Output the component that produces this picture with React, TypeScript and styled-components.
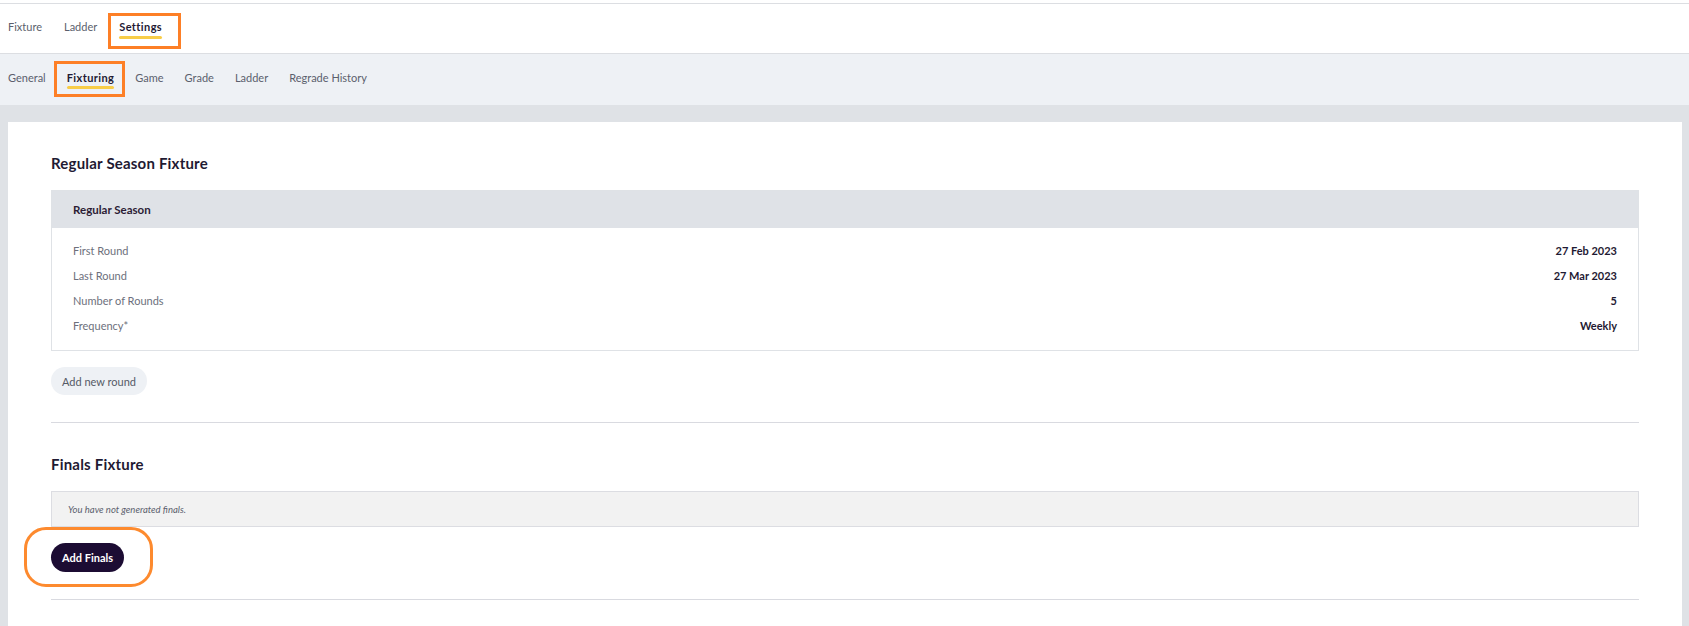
import React from "react";
import styled, { createGlobalStyle, css } from "styled-components";

const GlobalStyle = createGlobalStyle`
  html, body { margin: 0; padding: 0; background: #ffffff; }
  body { font-family: Lato, "Noto Sans", Arial, sans-serif; color: #1f1a33; }
  * { box-sizing: border-box; }
`;

const Page = styled.div`
  display: flex;
  flex-direction: column;
  min-height: 626px;
`;

const TopNav = styled.nav`
  margin-top: 3px;
  height: 51px;
  border-top: 1px solid #dcdee2;
  border-bottom: 1px solid #dcdee2;
  background: #ffffff;
  display: flex;
  align-items: center;
  padding: 0 8px 4px;
  gap: 22px;
`;

const SubNav = styled.nav`
  height: 51px;
  background: #eef1f5;
  display: flex;
  align-items: center;
  padding: 0 8px 3px;
  gap: 21px;
`;

const Tab = styled.span<{ $active?: boolean; $box?: "top" | "sub" }>`
  position: relative;
  font-size: 11px;
  line-height: 16px;
  color: #5b5f6d;
  white-space: nowrap;
  ${(p) =>
    p.$active &&
    css`
      font-weight: 700;
      color: #1f1a33;
      letter-spacing: 0.4px;
      &::after {
        content: "";
        position: absolute;
        left: 0;
        right: 0;
        bottom: ${p.$box === "top" ? "-4px" : "-3px"};
        height: 3px;
        border-radius: 2px;
        background: #f8cd48;
      }
    `}
  ${(p) =>
    p.$box &&
    css`
      &::before {
        content: "";
        position: absolute;
        left: ${p.$box === "top" ? "-11px" : "-13px"};
        right: ${p.$box === "top" ? "-19px" : "-11px"};
        top: ${p.$box === "top" ? "-6px" : "-9px"};
        bottom: ${p.$box === "top" ? "-14px" : "-11px"};
        border: 3px solid #fd7f26;
      }
    `}
`;

const Main = styled.main`
  flex: 1;
  background: #dfe2e6;
  padding: 17px 7px 0 8px;
  display: flex;
`;

const Card = styled.div`
  flex: 1;
  background: #ffffff;
  padding: 29px 43px 30px;
  display: flex;
  flex-direction: column;
`;

const SectionTitle = styled.h2`
  margin: 0;
  font-size: 15px;
  line-height: 24px;
  font-weight: 700;
  color: #1f1a33;
  letter-spacing: 0.2px;
`;

const Panel = styled.div`
  margin-top: 15px;
  border: 1px solid #dfe2e6;
`;

const PanelHeader = styled.div`
  height: 37px;
  background: #dfe2e7;
  display: flex;
  align-items: center;
  padding: 0 21px;
  font-size: 11.5px;
  font-weight: 700;
  color: #2c1c35;
`;

const PanelBody = styled.div`
  padding: 10px 21px 12px;
  display: flex;
  flex-direction: column;
`;

const Row = styled.div`
  height: 25px;
  display: flex;
  align-items: center;
  justify-content: space-between;
  font-size: 11px;
`;

const Label = styled.span`
  color: #6d707c;
`;

const Value = styled.span`
  color: #1f1a33;
  font-weight: 700;
`;

const Button = styled.button<{ $variant: "light" | "dark"; $circled?: boolean }>`
  position: relative;
  align-self: flex-start;
  margin-top: 16px;
  border: none;
  border-radius: 999px;
  font-family: inherit;
  font-size: 11px;
  padding: 0 11px;
  cursor: pointer;
  ${(p) =>
    p.$variant === "light"
      ? css`
          height: 28px;
          background: #eef1f5;
          color: #555a66;
        `
      : css`
          height: 29px;
          background: #1c0c33;
          color: #ffffff;
          font-weight: 700;
        `}
  ${(p) =>
    p.$circled &&
    css`
      &::after {
        content: "";
        position: absolute;
        left: -27px;
        right: -29px;
        top: -16px;
        bottom: -15px;
        border: 3px solid #fd8a2e;
        border-radius: 22px;
      }
    `}
`;

const Divider = styled.hr`
  margin: 27px 0 0;
  border: none;
  border-top: 1px solid #d9dae0;
`;

const Spacer = styled.div`
  height: 29px;
`;

const Notice = styled.div`
  margin-top: 15px;
  height: 36px;
  background: #f2f2f2;
  border: 1px solid #dcdde2;
  display: flex;
  align-items: center;
  padding: 0 16px;
  font-size: 9.5px;
  font-style: italic;
  color: #5b5f6d;
`;

const rows: [string, string][] = [
  ["First Round", "27 Feb 2023"],
  ["Last Round", "27 Mar 2023"],
  ["Number of Rounds", "5"],
  ["Frequency*", "Weekly"],
];

export default function App() {
  return (
    <Page>
      <GlobalStyle />
      <TopNav>
        <Tab>Fixture</Tab>
        <Tab>Ladder</Tab>
        <Tab $active $box="top">Settings</Tab>
      </TopNav>
      <SubNav>
        <Tab>General</Tab>
        <Tab $active $box="sub">Fixturing</Tab>
        <Tab>Game</Tab>
        <Tab>Grade</Tab>
        <Tab>Ladder</Tab>
        <Tab>Regrade History</Tab>
      </SubNav>
      <Main>
        <Card>
          <SectionTitle>Regular Season Fixture</SectionTitle>
          <Panel>
            <PanelHeader>Regular Season</PanelHeader>
            <PanelBody>
              {rows.map(([l, v]) => (
                <Row key={l}>
                  <Label>{l}</Label>
                  <Value>{v}</Value>
                </Row>
              ))}
            </PanelBody>
          </Panel>
          <Button $variant="light">Add new round</Button>
          <Divider />
          <Spacer />
          <SectionTitle>Finals Fixture</SectionTitle>
          <Notice>You have not generated finals.</Notice>
          <Button $variant="dark" $circled>Add Finals</Button>
          <Divider />
        </Card>
      </Main>
    </Page>
  );
}
